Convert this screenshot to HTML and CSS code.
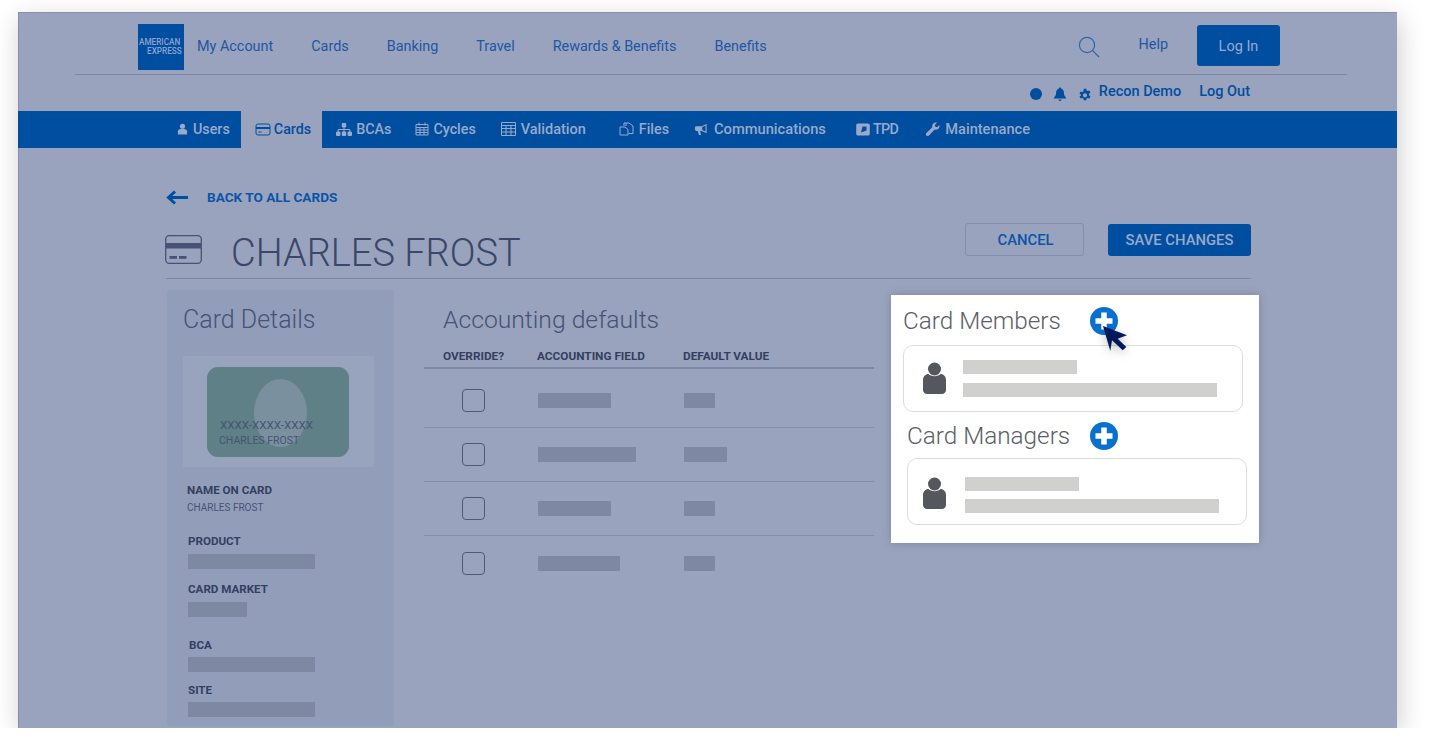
FILE: index.html
```html
<!DOCTYPE html>
<html lang="en">
<head>
    <meta charset="UTF-8">
    <title>Card Details - Charles Frost</title>
    <link rel="stylesheet" href="styles.css">
</head>
<body>
    <div class="frame">
        <!-- Top header -->
        <header class="topbar">
            <div class="logo"><span>AMERICAN</span><span class="logo-second">EXPRESS</span></div>
            <nav class="mainnav">
                <a>My Account</a>
                <a>Cards</a>
                <a>Banking</a>
                <a>Travel</a>
                <a>Rewards &amp; Benefits</a>
                <a>Benefits</a>
            </nav>
            <svg class="search" viewBox="0 0 22 22" width="22" height="22"><circle cx="9" cy="9" r="7.6"/><path d="M14.4 14.4 21 21"/></svg>
            <a class="help">Help</a>
            <button class="login">Log In</button>
        </header>

        <div class="userrow">
            <span class="dot"></span>
            <svg class="bell" viewBox="0 0 14 14" width="14" height="14"><path d="M7 0.5c.8 0 1.2.5 1.3 1.2 1.7.5 2.5 2 2.6 3.8.1 2.4.8 3.9 2.1 5v1H1v-1c1.300-1.100 2-2.600 2.100-5 .1-1.800.9-3.300 2.600-3.800C5.800 1 6.200.5 7 .5zM5.400 12.500h3.200C8.400 13.400 7.800 14 7 14s-1.400-.6-1.600-1.500z"/></svg>
            <svg class="gear" viewBox="0 0 14 14" width="14" height="14"><path fill-rule="evenodd" d="M5.800.8h2.400l.4 1.800 1 .5 1.700-.7 1.200 2-1.400 1.200v1.800l1.400 1.200-1.200 2-1.700-.7-1 .5-.4 1.800H5.800l-.4-1.800-1-.5-1.700.7-1.200-2 1.400-1.200V6.600L1.500 5.400l1.200-2 1.700.7 1-.5zM7 5.200a2.100 2.100 0 1 0 0 4.200 2.100 2.100 0 0 0 0-4.200z"/></svg>
            <a class="recon">Recon Demo</a>
            <a class="logout">Log Out</a>
        </div>

        <!-- Blue tab bar -->
        <nav class="tabbar">
            <a class="tab tab-users"><svg viewBox="0 0 12 12" width="11" height="12"><circle cx="6" cy="3" r="2.800"/><path d="M1 12V8.500C1 7 2.500 6 4 6h4c1.500 0 3 1 3 2.500V12z"/></svg>Users</a>
            <a class="tab tab-active"><svg class="line-icon" viewBox="0 0 16 13" width="16" height="13"><rect x="1" y="1" width="14" height="11" rx="2"/><path d="M1 4.500h14M1 5.500h14M3.500 9h3"/></svg>Cards</a>
            <a class="tab tab-bcas"><svg viewBox="0 0 16 13" width="16" height="13"><rect x="5.800" y="0" width="4.400" height="4.400" rx="1"/><rect x="0" y="8.500" width="4.400" height="4.400" rx="1"/><rect x="5.800" y="8.500" width="4.400" height="4.400" rx="1"/><rect x="11.600" y="8.500" width="4.400" height="4.400" rx="1"/><path class="thin" d="M8 4v5M2.200 9V6.500h11.600V9"/></svg>BCAs</a>
            <a class="tab tab-cycles"><svg class="line-icon" viewBox="0 0 14 14" width="14" height="14"><path d="M1 2.500h12V13H1zM4 .5v3M10 .5v3M1 5.500h12M1 8h12M1 10.500h12M5 5.500V13M9 5.500V13"/></svg>Cycles</a>
            <a class="tab tab-validation"><svg class="line-icon" viewBox="0 0 15 14" width="15" height="14"><path d="M.5.500h14v13H.5zM.5 3.500h14M.5 6.500h14M.5 10h14M5 3.500v10M10 3.500v10"/></svg>Validation</a>
            <a class="tab tab-files"><svg class="line-icon" viewBox="0 0 15 14" width="15" height="14"><path d="M5 4V1h5l4 3v7.500H9.500M1 5h5l3 2.500V13H1zM7 1v3"/></svg>Files</a>
            <a class="tab tab-comms"><svg viewBox="0 0 14 13" width="13" height="13"><path d="M12.500.5v10L7 8H5.500l1 4.500H4.200L3 8H1.500C.7 8 0 7.300 0 6.500v-2C0 3.700.7 3 1.500 3H7z M11.300 2.300 7.800 3.900v3.200l3.500 1.600z" fill-rule="evenodd"/></svg>Communications</a>
            <a class="tab tab-tpd"><svg viewBox="0 0 14 13" width="14" height="13"><path fill-rule="evenodd" d="M2 .5h10c1 0 1.800.8 1.800 1.800v8.400c0 1-.8 1.800-1.800 1.800H2c-1 0-1.800-.8-1.800-1.800V2.300C.2 1.300 1 .5 2 .5zM5 9.500l5.500-2V3.500H6.500z"/></svg>TPD</a>
            <a class="tab tab-maint"><svg viewBox="0 0 15 14" width="15" height="14"><path d="M14.300 3c.4 1.500 0 3-1.100 3.900-1 .8-2.300 1-3.500.6L4 13.500c-.7.7-1.900.7-2.600 0s-.7-1.800 0-2.500L7.300 5.200c-.4-1.300 0-2.700 1-3.600C9.300.6 10.700.3 12 .7L9.800 3l.5 1.700 1.800.5z"/></svg>Maintenance</a>
        </nav>

        <main class="content">
            <a class="back">
                <svg viewBox="0 0 22 15" width="22" height="15"><path d="M9 1.500 2.500 7.500l6.500 6M3 7.500h19"/></svg>
                <span>BACK TO ALL CARDS</span>
            </a>

            <div class="titlerow">
                <svg class="title-icon" viewBox="0 0 37 29" width="37" height="29"><rect x="0.700" y="0.700" width="35.600" height="27.600" rx="3.500" class="card-outline"/><rect x="1" y="8" width="35" height="5.500" class="card-fill"/><rect x="4.500" y="21" width="7.500" height="2.800" class="card-fill"/><rect x="14" y="21" width="7.500" height="2.800" class="card-fill"/></svg>
                <h1>CHARLES FROST</h1>
                <button class="btn-cancel">CANCEL</button>
                <button class="btn-save">SAVE CHANGES</button>
            </div>

            <div class="columns">
                <section class="details">
                    <h2>Card Details</h2>
                    <div class="card-preview">
                        <div class="card-art">
                            <div class="card-oval"></div>
                            <div class="card-number">XXXX-XXXX-XXXX</div>
                            <div class="card-name">CHARLES FROST</div>
                        </div>
                    </div>
                    <h4 class="field-name">NAME ON CARD</h4>
                    <p class="field-value">CHARLES FROST</p>
                    <h4 class="field-product">PRODUCT</h4>
                    <div class="bar bar-long"></div>
                    <h4 class="field-market">CARD MARKET</h4>
                    <div class="bar bar-short"></div>
                    <h4 class="field-bca">BCA</h4>
                    <div class="bar bar-long"></div>
                    <h4 class="field-site">SITE</h4>
                    <div class="bar bar-long"></div>
                </section>

                <section class="defaults">
                    <h2>Accounting defaults</h2>
                    <div class="table-head">
                        <span>OVERRIDE?</span>
                        <span>ACCOUNTING FIELD</span>
                        <span>DEFAULT VALUE</span>
                    </div>
                    <div class="table-row first-row">
                        <div class="checkbox"></div>
                        <div class="bar w73"></div>
                        <div class="bar w31"></div>
                    </div>
                    <div class="table-row">
                        <div class="checkbox"></div>
                        <div class="bar w98"></div>
                        <div class="bar w43"></div>
                    </div>
                    <div class="table-row">
                        <div class="checkbox"></div>
                        <div class="bar w73"></div>
                        <div class="bar w31"></div>
                    </div>
                    <div class="table-row last-row">
                        <div class="checkbox"></div>
                        <div class="bar w82"></div>
                        <div class="bar w31"></div>
                    </div>
                </section>
            </div>
        </main>

        <!-- Highlighted panel, sits over the dimmed page -->
        <aside class="spotlight">
            <div class="sp-heading">
                <h3>Card Members</h3>
                <svg class="plus" viewBox="0 0 28 28" width="28" height="28"><circle cx="14" cy="14" r="14"/><path d="M14 5.500v17M5.500 14h17"/></svg>
            </div>
            <div class="person-card">
                <svg class="person" viewBox="0 0 23 32" width="23" height="32"><circle cx="11.500" cy="7" r="6.500"/><path d="M0 18c0-3.500 2.500-6 5.500-6 1.500 1.400 3.600 2.200 6 2.200s4.500-.8 6-2.200c3 0 5.500 2.500 5.500 6v10c0 2.200-1.800 4-4 4H4c-2.200 0-4-1.800-4-4z"/></svg>
                <div class="person-lines">
                    <div class="line line-short"></div>
                    <div class="line line-long"></div>
                </div>
            </div>
            <div class="sp-heading sp-heading-second">
                <h3>Card Managers</h3>
                <svg class="plus" viewBox="0 0 28 28" width="28" height="28"><circle cx="14" cy="14" r="14"/><path d="M14 5.500v17M5.500 14h17"/></svg>
            </div>
            <div class="person-card person-card-second">
                <svg class="person" viewBox="0 0 23 32" width="23" height="32"><circle cx="11.500" cy="7" r="6.500"/><path d="M0 18c0-3.500 2.500-6 5.500-6 1.500 1.400 3.600 2.200 6 2.200s4.500-.8 6-2.200c3 0 5.500 2.500 5.500 6v10c0 2.200-1.800 4-4 4H4c-2.200 0-4-1.800-4-4z"/></svg>
                <div class="person-lines">
                    <div class="line line-short"></div>
                    <div class="line line-long"></div>
                </div>
            </div>
            <svg class="cursor" viewBox="0 0 26 26" width="26" height="26"><path d="M1 1 25 10.300 15.700 13.700 24.300 22 20.700 25.300 10 15.300 8.300 25.900z"/></svg>
        </aside>
    </div>
</body>
</html>
```

FILE: styles.css
```css
body {
    margin: 0;
    padding: 12px 0 0 18px;
    background-color: #ffffff;
    font-family: Roboto, "Liberation Sans", sans-serif;
    overflow: hidden;
}
.frame {
    position: relative;
    width: 1379px;
    height: 716px;
    background-color: #99a3bd;
    box-shadow: inset 1px 1px 0 #858fae, 2px 7px 24px rgba(0, 0, 0, 0.2);
    overflow: hidden;
}
a {
    cursor: pointer;
}

/* header */
.topbar {
    display: flex;
    align-items: center;
    box-sizing: border-box;
    height: 63px;
    margin: 0 50px 0 57px;
    padding: 8px 67px 0 63px;
    border-bottom: 1px solid #7e88a6;
}
.logo {
    display: flex;
    flex-direction: column;
    justify-content: center;
    flex: none;
    box-sizing: border-box;
    width: 46px;
    height: 46px;
    padding-left: 1px;
    background-color: #004ea0;
    color: #8da3cf;
    font-size: 8.200px;
    font-weight: 500;
    line-height: 9px;
    overflow: hidden;
    white-space: nowrap;
}
.logo-second {
    padding-left: 8px;
}
.mainnav {
    display: flex;
    gap: 38px;
    margin: -2px 0 0 13px;
}
.mainnav a {
    color: #1d57a6;
    font-size: 14.400px;
}
.search {
    margin-left: auto;
    fill: none;
    stroke: #2e66ad;
    stroke-width: 1.2;
}
.help {
    margin: -5px 0 0 39px;
    color: #1d57a6;
    font-size: 14.400px;
}
.login {
    width: 83px;
    height: 41px;
    margin: -3px 0 0 29px;
    padding-top: 3px;
    border: none;
    border-radius: 3px;
    background-color: #004ea0;
    color: #99a9cc;
    font-family: inherit;
    font-size: 14.500px;
}

.userrow {
    display: flex;
    align-items: center;
    justify-content: flex-end;
    box-sizing: border-box;
    height: 36px;
    padding: 0 147px 2px 0;
}
.dot {
    width: 12px;
    height: 12px;
    margin-top: 4px;
    border-radius: 50%;
    background-color: #004ea0;
}
.bell {
    margin: 4px 0 0 11px;
    fill: #004ea0;
}
.gear {
    margin: 5px 0 0 11px;
    fill: #004ea0;
}
.recon {
    margin: -2px 0 0 7px;
    color: #004ea0;
    font-size: 14.500px;
    font-weight: 500;
}
.logout {
    margin: -2px 0 0 18px;
    color: #004ea0;
    font-size: 14.500px;
    font-weight: 500;
}

/* tab bar */
.tabbar {
    display: flex;
    align-items: stretch;
    box-sizing: border-box;
    height: 37px;
    padding-left: 159px;
    background-color: #004ea0;
}
.tab {
    display: flex;
    align-items: center;
    gap: 5px;
    padding-bottom: 1px;
    color: #9aa9c9;
    font-size: 14.300px;
    font-weight: 500;
}
.tab svg {
    flex: none;
    fill: #9aa9c9;
}
.tab svg.line-icon {
    fill: none;
    stroke: #9aa9c9;
    stroke-width: 1;
}
.tab svg .thin {
    fill: none;
    stroke: #9aa9c9;
}
.tab-active {
    gap: 3px;
    margin-left: 11px;
    padding: 0 11px 1px 14px;
    background-color: #99a3bd;
    color: #004ea0;
}
.tab-active svg.line-icon {
    stroke: #004ea0;
}
.tab-bcas { margin-left: 14px; gap: 4px; }
.tab-cycles { margin-left: 24px; gap: 4px; }
.tab-validation { margin-left: 25px; font-size: 14.500px; }
.tab-files { margin-left: 33px; }
.tab-comms { margin-left: 26px; gap: 6px; font-size: 14.700px; }
.tab-tpd { margin-left: 30px; gap: 3px; letter-spacing: -0.6px; }
.tab-maint { margin-left: 27px; font-size: 14.600px; }

/* main content */
.content {
    width: 1085px;
    margin-left: 148px;
}
.back {
    display: flex;
    align-items: center;
    gap: 19px;
    height: 26px;
    margin-top: 36px;
    color: #0a55a8;
    font-size: 13.600px;
    font-weight: 700;
}
.back svg {
    fill: none;
    stroke: #004ea0;
    stroke-width: 3;
}
.titlerow {
    display: flex;
    align-items: flex-start;
    box-sizing: border-box;
    height: 69px;
    padding-top: 14px;
    border-bottom: 1px solid #7e88a6;
}
.title-icon {
    margin: 11px 0 0 -1px;
}
.card-outline {
    fill: none;
    stroke: #465375;
    stroke-width: 1.300;
}
.card-fill {
    fill: #465375;
}
h1 {
    flex: 1;
    margin: 7px 0 0 29px;
    color: #3a4769;
    font-size: 38px;
    font-weight: 300;
    line-height: 44px;
}
.titlerow button {
    font-family: inherit;
    font-size: 14.800px;
    font-weight: 500;
    border-radius: 3px;
}
.btn-cancel {
    width: 119px;
    height: 33px;
    margin: -1px 24px 0 0;
    padding-left: 8px;
    border: 1px solid #838eac;
    background: none;
    color: #0a55a8;
}
.btn-save {
    width: 143px;
    height: 32px;
    border: none;
    background-color: #004ea0;
    color: #9aa9c9;
}

.columns {
    display: flex;
    gap: 30px;
    margin: 11px 0 0 1px;
}
h2 {
    margin: 0;
    color: #465375;
    font-size: 24.700px;
    font-weight: 300;
    line-height: 30px;
}
.details {
    box-sizing: border-box;
    width: 227px;
    height: 436px;
    padding: 15px 20px 0 16px;
    background-color: #929dba;
    border-radius: 3px;
}
.details h2 {
    font-size: 25px;
}
.card-preview {
    display: flex;
    align-items: center;
    box-sizing: border-box;
    width: 191px;
    height: 111px;
    margin-top: 21px;
    padding-left: 24px;
    background-color: #98a3be;
}
.card-art {
    position: relative;
    box-sizing: border-box;
    width: 142px;
    height: 90px;
    padding: 51px 0 0 13px;
    background-color: #5f8086;
    border-radius: 11px;
    color: #465375;
}
.card-oval {
    position: absolute;
    top: 12px;
    left: 47px;
    width: 53px;
    height: 68px;
    background-color: #7a909f;
    border-radius: 50%;
}
.card-number, .card-name {
    position: relative;
    white-space: nowrap;
}
.card-number {
    font-size: 11.600px;
    line-height: 14px;
}
.card-name {
    margin: 1px 0 0 -1px;
    font-size: 10.500px;
    line-height: 15px;
}
h4 {
    margin: 0;
    color: #333f60;
    font-size: 11.600px;
    font-weight: 700;
    line-height: 14px;
}
.field-name { margin: 16px 0 0 4px; }
.field-value {
    margin: 5px 0 0 4px;
    color: #465375;
    font-size: 10px;
    line-height: 12px;
}
.field-product { margin: 20px 0 0 5px; }
.field-market { margin: 13px 0 0 5px; }
.field-bca { margin: 21px 0 0 6px; }
.field-site { margin: 11px 0 0 5px; }
.bar {
    height: 15px;
    background-color: #7e88a3;
}
.details .bar {
    margin: 6px 0 0 5px;
}
.details .field-bca + .bar, .details .field-site + .bar {
    margin-top: 5px;
}
.details .bar-long { width: 127px; }
.details .bar-short { width: 59px; }

.defaults {
    width: 450px;
    padding-top: 15px;
}
.defaults h2 {
    margin-left: 19px;
}
.table-head {
    display: grid;
    grid-template-columns: 94px 146px 1fr;
    box-sizing: border-box;
    height: 22px;
    margin-top: 12px;
    padding: 2px 0 0 19px;
    border-bottom: 2px solid #7e88a6;
    color: #333f60;
    font-size: 11.800px;
    font-weight: 700;
    line-height: 14px;
    white-space: nowrap;
}
.table-row {
    display: grid;
    grid-template-columns: 76px 146px 1fr;
    align-items: center;
    box-sizing: border-box;
    height: 54px;
    padding-left: 38px;
    border-bottom: 1px solid #838ead;
}
.first-row {
    height: 59px;
    padding-top: 5px;
}
.last-row {
    border-bottom: none;
}
.checkbox {
    box-sizing: border-box;
    width: 23px;
    height: 23px;
    border: 1.500px solid #4d5a7c;
    border-radius: 4px;
}
.w73 { width: 73px; }
.w98 { width: 98px; }
.w82 { width: 82px; }
.w31 { width: 31px; }
.w43 { width: 43px; }

/* spotlight panel */
.spotlight {
    position: absolute;
    top: 283px;
    left: 873px;
    box-sizing: border-box;
    width: 368px;
    height: 248px;
    padding: 11px 12px 0;
    background-color: #ffffff;
    box-shadow: 0 0 8px rgba(40, 50, 90, 0.25);
}
.sp-heading {
    display: flex;
    align-items: center;
    justify-content: space-between;
    width: 215px;
    height: 30px;
}
.sp-heading h3 {
    margin: 0;
    color: #5a6067;
    font-size: 24.300px;
    font-weight: 300;
    line-height: 30px;
}
.sp-heading-second {
    width: 211px;
    margin: 9px 0 0 4px;
}
.plus circle {
    fill: #0a70d0;
}
.plus path {
    fill: none;
    stroke: #ffffff;
    stroke-width: 5.500;
}
.person-card {
    display: flex;
    align-items: center;
    gap: 17px;
    box-sizing: border-box;
    width: 340px;
    height: 67px;
    margin-top: 9px;
    padding: 0 19px;
    border: 1px solid #dddddd;
    border-radius: 10px;
}
.person-card-second {
    gap: 19px;
    margin: 7px 0 0 4px;
    padding-left: 15px;
}
.person-card-second .person-lines {
    margin-top: 7px;
}
.person-card-second .line-long {
    margin-top: 8px;
}
.person {
    margin-top: -2px;
    fill: #54575e;
}
.person-card-second .person {
    margin-top: 2px;
}
.line {
    height: 14px;
    background-color: #d0d0ce;
}
.line-short {
    width: 114px;
}
.line-long {
    width: 254px;
    margin-top: 9px;
}
.cursor {
    position: absolute;
    top: 30px;
    left: 211px;
    fill: #001a5c;
    filter: drop-shadow(0 3px 5px rgba(0, 0, 0, 0.25));
}
```
